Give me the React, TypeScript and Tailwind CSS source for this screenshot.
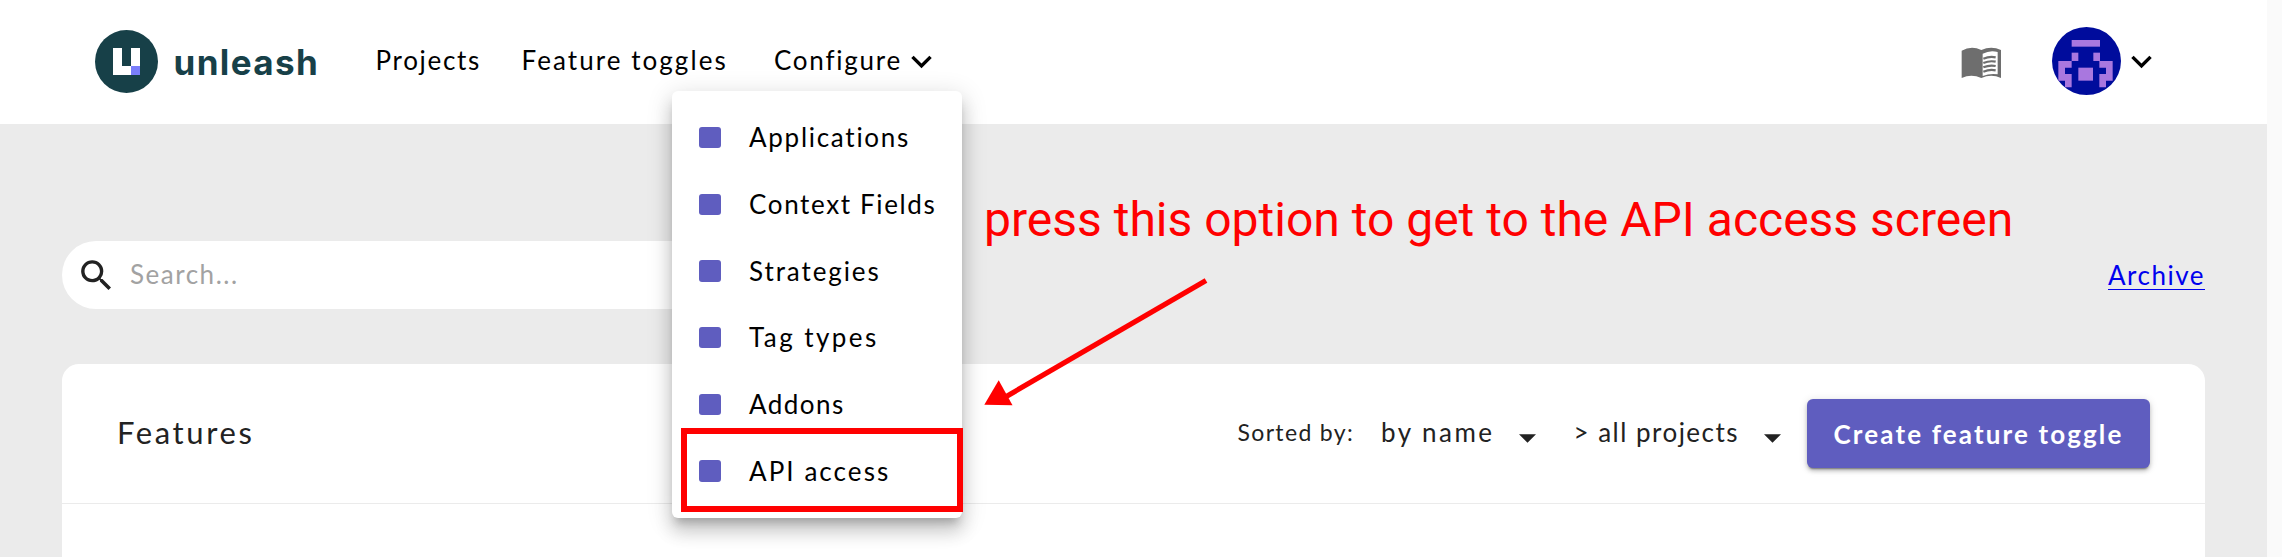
import React from "react";

const menuItems = [
  { label: "Applications", tracking: "tracking-[1.73px]" },
  { label: "Context Fields", tracking: "tracking-[1.64px]" },
  { label: "Strategies", tracking: "tracking-[1.91px]" },
  { label: "Tag types", tracking: "tracking-[2.44px]" },
  { label: "Addons", tracking: "tracking-[1.46px]" },
  { label: "API access", tracking: "tracking-[2.06px]" },
];

function Chevron({ className }: { className: string }) {
  return (
    <svg viewBox="0 0 24 24" className={`size-[41px] shrink-0 ${className}`} fill="#000">
      <path d="M7.41 8.59 12 13.17l4.59-4.58L18 10l-6 6-6-6 1.41-1.41z" />
    </svg>
  );
}

function LogoMark() {
  return (
    <svg viewBox="0 0 63 63" className="mt-[30px] size-[63px] shrink-0">
      <circle cx="31.5" cy="31.5" r="31.5" fill="#174048" />
      <path d="M18 18h9v18h9V18h9v18h-9v9H18z" fill="#fff" />
      <path d="M36 36h9v9h-9z" fill="#7a7efb" />
    </svg>
  );
}

function BookIcon() {
  return (
    <svg viewBox="0 0 123 96" className="mt-[47px] h-8 w-[41px] shrink-0">
      <path d="M2 11Q31-5 61 9q30-14 59 0v84q-29-13-59 0-30-13-59 0z" fill="#6e6e6e" />
      <path d="M65 20q23-12 45-5v67q-22-4-45 5z" fill="#fff" />
      <g stroke="#6e6e6e" strokeWidth="6.5" fill="none">
        <path d="M67 35q19-8 37-4" />
        <path d="M67 48q19-8 37-4" />
        <path d="M67 61q19-8 37-4" />
        <path d="M67 74q19-8 37-4" />
      </g>
    </svg>
  );
}

function Avatar() {
  return (
    <svg viewBox="0 0 207 204" className="mt-[27px] h-[68px] w-[69px] shrink-0">
      <ellipse cx="103.5" cy="102" rx="103.5" ry="102" fill="#000c9c" />
      <g fill="#a977df">
        <path d="M59 39h85v20H59z" />
        <path d="M59 77h20v25H59z" />
        <path d="M124 77h20v25h-20z" />
        <path d="M19 102h40v20H39v19h20v40H39v-20H19z" />
        <path d="M182 102h-40v20h20v19h-20v40h20v-20h20z" />
        <path d="M79 122h44v39H79z" />
      </g>
    </svg>
  );
}

function Select({ label, className, arrowClass }: { label: string; className: string; arrowClass: string }) {
  return (
    <div className={`flex shrink-0 items-start text-[26px] leading-8 whitespace-nowrap ${className}`}>
      <span>{label}</span>
      <svg viewBox="0 0 16 8" className={`mt-[18px] h-[9px] w-[17px] shrink-0 ${arrowClass}`} fill="#222">
        <path d="M0 0h16L8 8z" />
      </svg>
    </div>
  );
}

function ConfigureMenu() {
  return (
    <div className="absolute top-[91px] left-[672px] h-[427px] w-[290px] rounded-[6px] bg-white pt-[13.4px] shadow-[0px_8px_8px_-4px_rgba(0,0,0,0.2),0px_14px_17px_1px_rgba(0,0,0,0.14),0px_5px_24px_3px_rgba(0,0,0,0.12)]">
      {menuItems.map((item) => (
        <div key={item.label} className="flex h-[66.67px] items-center pl-[27px]">
          <span className="h-[21.5px] w-[22px] rounded-[3px] bg-[#5f5dbf]" />
          <span className={`mb-px ml-[28px] text-[26px] leading-8 whitespace-nowrap text-black ${item.tracking}`}>
            {item.label}
          </span>
        </div>
      ))}
    </div>
  );
}

export default function App() {
  return (
    <div className="relative flex h-[557px] w-[2282px] overflow-hidden bg-[#fafafa] font-['Lato',sans-serif] text-[#222]">
      <div className="flex w-[2267px] flex-col bg-[#ebebeb]">
        <header className="flex h-[124px] shrink-0 items-start bg-white text-[26px] leading-8 whitespace-nowrap text-black">
          <div className="flex w-[375.5px] shrink-0 items-start pl-[95px]">
            <LogoMark />
            <span className="mt-[40px] ml-[15.5px] font-['Inter',sans-serif] text-[35px] leading-[44px] font-bold tracking-[1.39px] text-[#174048]">
              unleash
            </span>
          </div>
          <a className="mt-[44px] w-[146px] shrink-0 tracking-[1.68px]">Projects</a>
          <a className="mt-[44px] w-[252.5px] shrink-0 tracking-[2.07px]">Feature toggles</a>
          <a className="mt-[44px] w-[126.6px] shrink-0 tracking-[1.75px]">Configure</a>
          <Chevron className="mt-[41px]" />
          <div className="ml-auto flex items-start pr-[105px]">
            <BookIcon />
            <div className="w-[50px]" />
            <Avatar />
            <Chevron className="mt-[41px]" />
          </div>
        </header>

        <main className="flex min-h-0 flex-1 flex-col pr-[62px] pl-[62px]">
          <div className="mt-[117px] flex h-[68px] shrink-0 items-center justify-between">
            <div className="flex h-[68px] w-[850px] items-center rounded-full bg-white pl-[14px]">
              <svg viewBox="0 0 24 24" className="size-[41px]" fill="#222">
                <path d="M15.5 14h-.79l-.28-.27A6.471 6.471 0 0 0 16 9.5 6.5 6.5 0 1 0 9.5 16c1.61 0 3.09-.59 4.23-1.57l.27.28v.79l5 4.99L20.49 19l-4.99-5zm-6 0C7.01 14 5 11.99 5 9.5S7.01 5 9.5 5 14 7.01 14 9.5 11.99 14 9.5 14z" />
              </svg>
              <span className="mb-[3px] ml-[13px] text-[26px] leading-8 tracking-[1.52px] text-[#a2a2a2]">Search...</span>
            </div>
            <a className="mb-[2px] h-[31px] border-b border-[#0000ee] text-[26px] leading-8 tracking-[1.5px] text-[#0000ee]">
              Archive
            </a>
          </div>

          <section className="mt-[55px] flex min-h-0 w-[2143px] flex-1 flex-col rounded-t-[17px] bg-white">
            <div className="flex h-[140px] shrink-0 items-start border-b border-[#ebebeb] pr-[55px] pl-[55px]">
              <h1 className="mt-12 text-[31px] leading-10 tracking-[2.62px]">Features</h1>
              <div className="ml-auto flex items-start">
                <span className="mt-[52px] w-[143.5px] text-[23px] leading-8 tracking-[1.35px] whitespace-nowrap">Sorted by:</span>
                <Select label="by name" className="mt-[52px] w-[192.5px] justify-between pr-[37.5px] tracking-[2.48px]" arrowClass="" />
                <Select label="> all projects" className="mt-[52px] w-[233.5px] justify-between pr-[26px] tracking-[1.48px]" arrowClass="" />
                <button className="mt-[35px] h-[69px] w-[343px] shrink-0 rounded-[6px] bg-[#5f5dbf] text-[26px] leading-8 font-bold tracking-[2.14px] whitespace-nowrap text-white shadow-[0px_3px_2px_-2px_rgba(0,0,0,0.4),0px_3px_4px_0px_rgba(0,0,0,0.2),0px_1px_8px_0px_rgba(0,0,0,0.12)]">
                  Create feature toggle
                </button>
              </div>
            </div>
          </section>
        </main>
      </div>

      <ConfigureMenu />

      <div className="absolute top-[428px] left-[681px] h-[84px] w-[282px] border-[6px] border-[#ff0000]" />
      <p className="absolute top-[191.6px] left-[984px] font-['Roboto',sans-serif] text-[48px] leading-[56px] whitespace-nowrap text-[#ff0000]">
        press this option to get to the API access screen
      </p>
      <svg viewBox="0 0 224 130" className="absolute top-[277px] left-[984px] h-[130px] w-[224px]" fill="#ff0000">
        <path d="M222 3.5 18 122" stroke="#ff0000" strokeWidth="5.2" />
        <path d="M.3 127.8 14.7 103.300 28.5 128.3z" />
      </svg>
    </div>
  );
}
